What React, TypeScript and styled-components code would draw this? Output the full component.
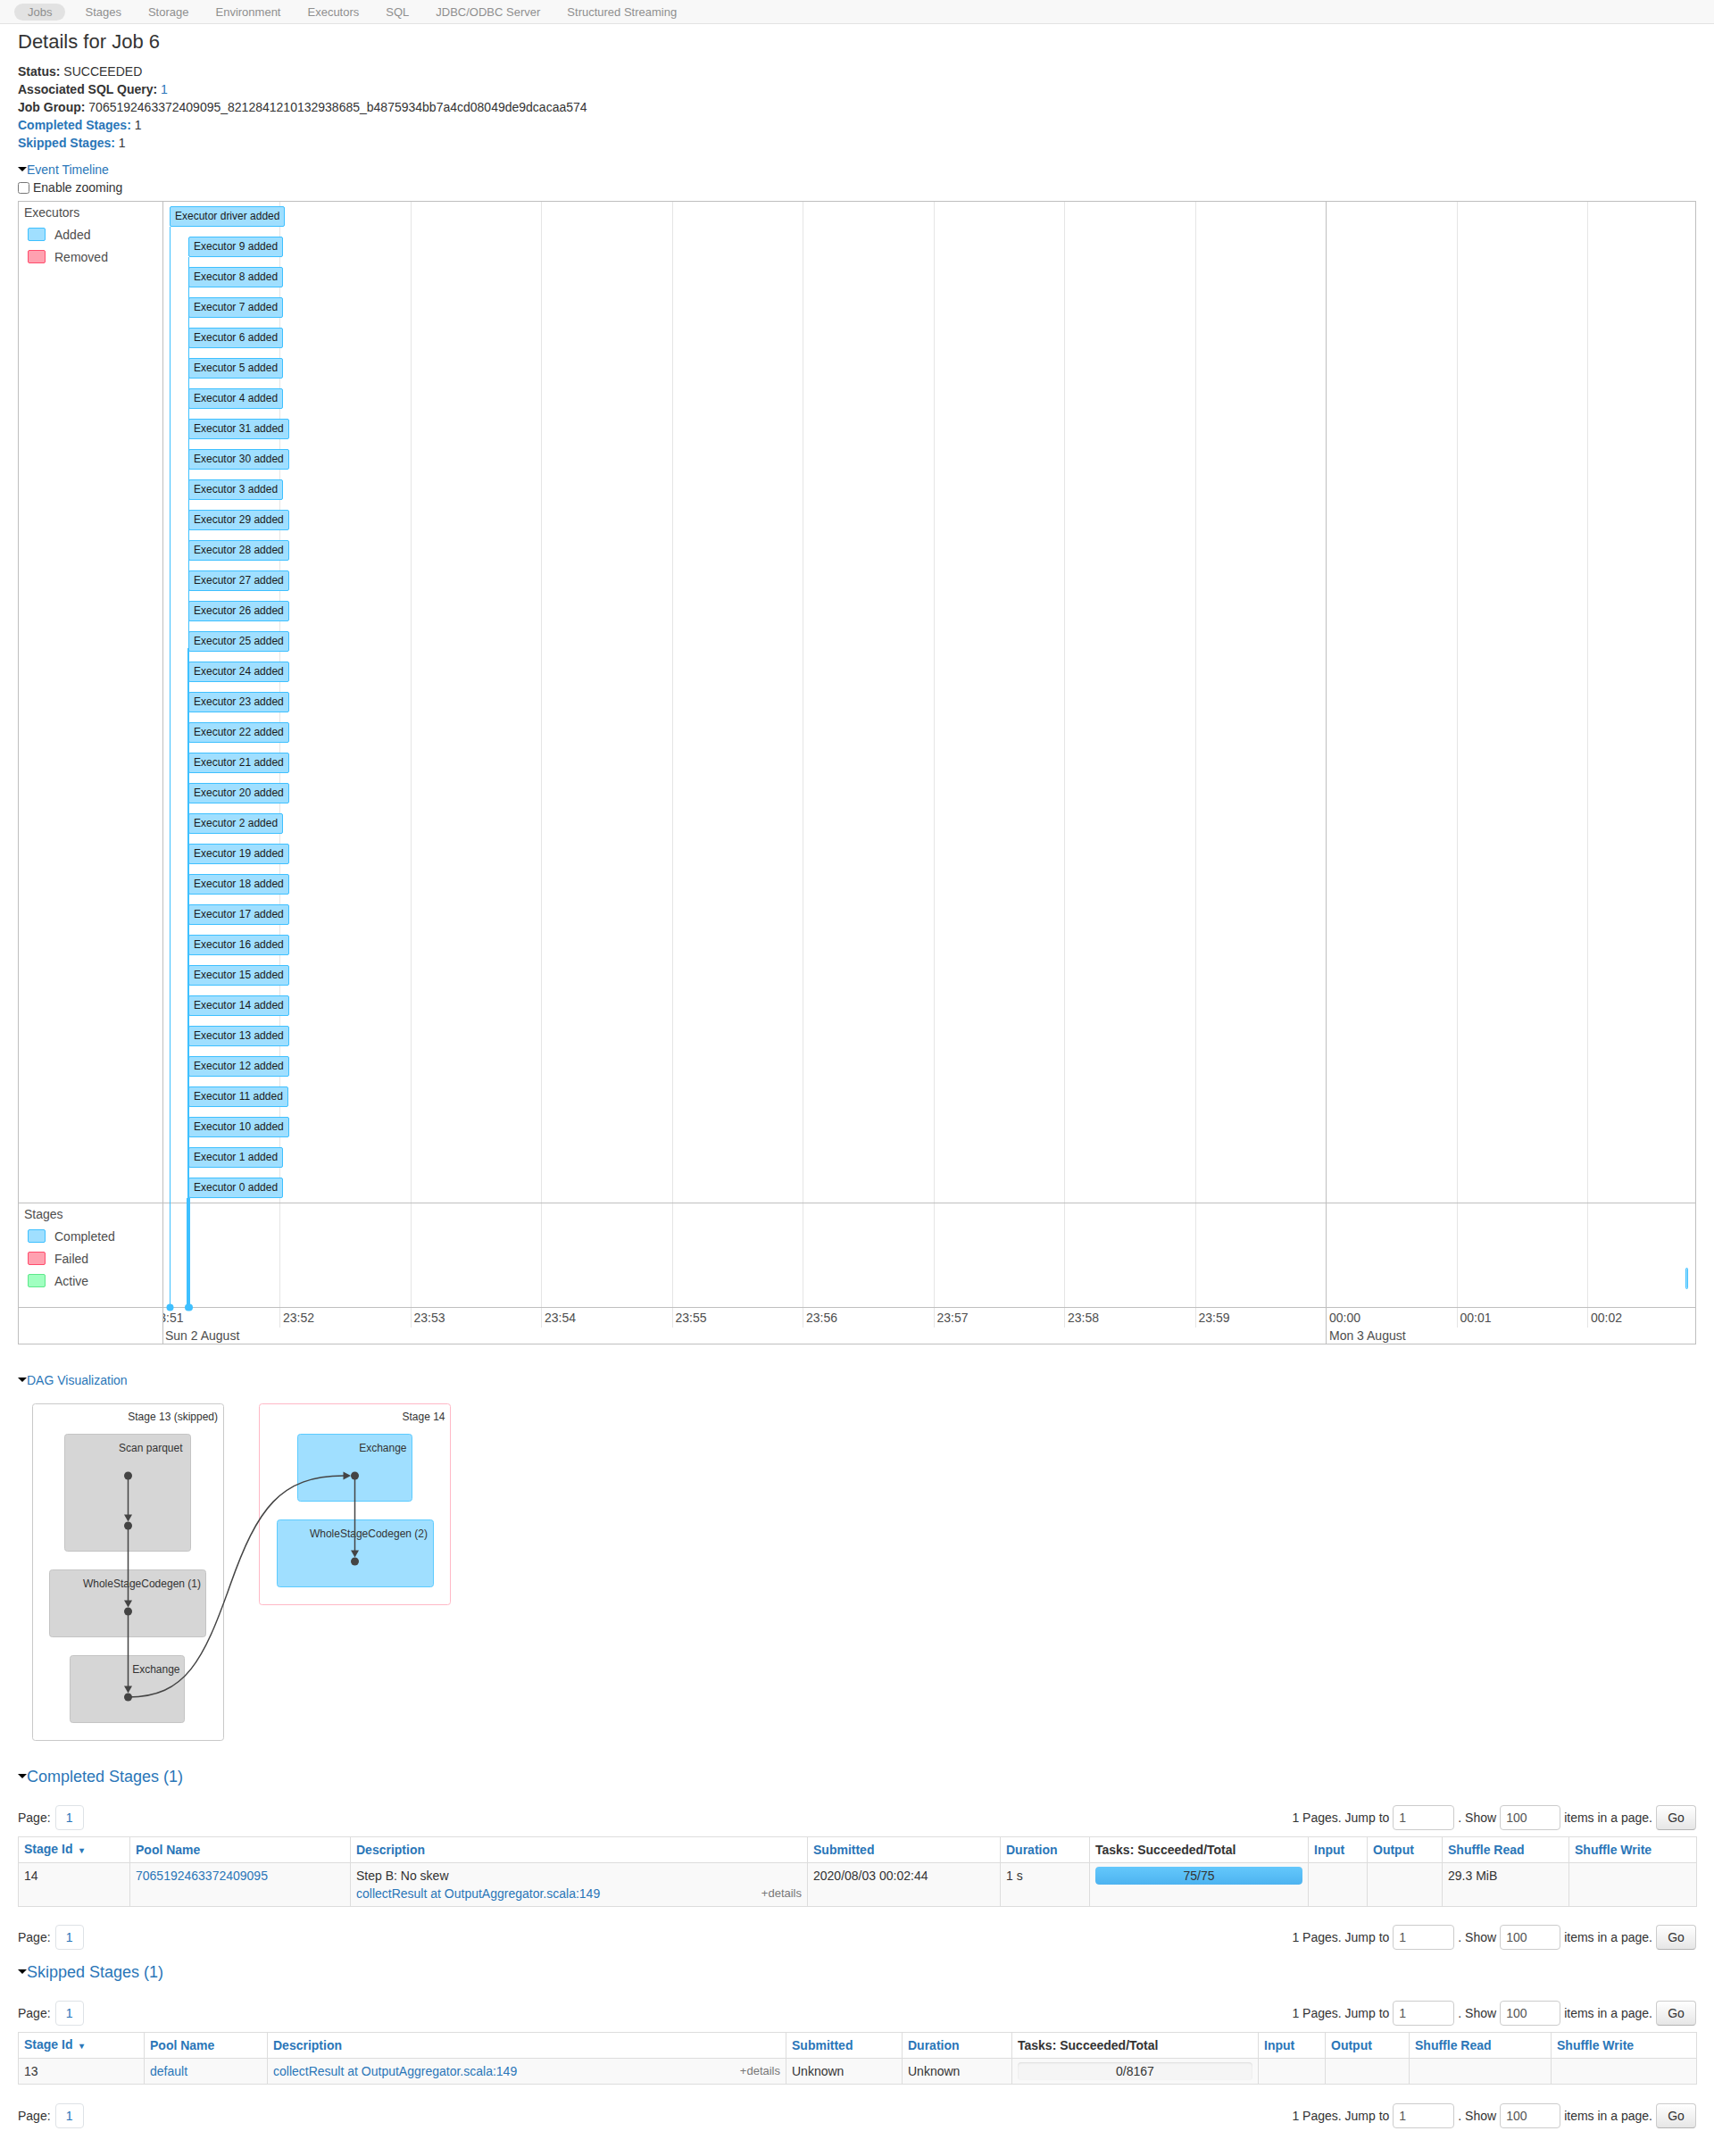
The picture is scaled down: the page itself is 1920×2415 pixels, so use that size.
import React from 'react';
import styled, { createGlobalStyle } from 'styled-components';

const LINK = '#2a76b8';

const GlobalStyle = createGlobalStyle`
  html, body { margin: 0; padding: 0; background: #fff; }
  body {
    font-family: "Liberation Sans", Arial, Helvetica, sans-serif;
    font-size: 14px;
    line-height: 20px;
    color: #333;
  }
  * { box-sizing: border-box; }
  a { color: ${LINK}; text-decoration: none; }
`;

/* ---------- nav ---------- */
const NavBar = styled.nav`
  height: 27px;
  border-bottom: 1px solid #e3e3e3;
  background: #f8f8f8;
  display: flex;
  align-items: center;
  padding-left: 16px;
`;
const NavItem = styled.a<{ $active?: boolean }>`
  font-size: 13px;
  line-height: 19px;
  height: 19px;
  padding: 0 15px;
  color: #8f8f8f;
  border-radius: 10px;
  background: ${(p) => (p.$active ? '#e2e2e2' : 'transparent')};
  margin-right: ${(p) => (p.$active ? '7px' : '0')};
`;

/* ---------- page ---------- */
const Page = styled.div`
  padding: 0 20px 31px;
`;
const Title = styled.h3`
  margin: 7px 0 10px;
  font-size: 22px;
  line-height: 26px;
  font-weight: normal;
  color: #333;
`;
const Summary = styled.ul`
  list-style: none;
  margin: 0;
  padding: 0;
`;
const SummaryItem = styled.li`
  line-height: 20px;
`;
const Strong = styled.strong`
  font-weight: bold;
`;
const StrongLink = styled.a`
  font-weight: bold;
`;

const Toggle = styled.div<{ $size: number; $line: number; $mt: number }>`
  display: flex;
  align-items: center;
  margin-top: ${(p) => p.$mt}px;
  font-size: ${(p) => p.$size}px;
  line-height: ${(p) => p.$line}px;
  color: ${LINK};
`;
const Arrow = styled.span`
  width: 0;
  height: 0;
  border-left: 5px solid transparent;
  border-right: 5px solid transparent;
  border-top: 5px solid #000;
  margin-top: -2px;
`;
const CheckRow = styled.label`
  display: flex;
  align-items: center;
  line-height: 20px;
`;
const Check = styled.input`
  width: 13px;
  height: 13px;
  margin: 0 4px 0 0;
`;

/* ---------- timeline ---------- */
const TimelineFrame = styled.div`
  margin-top: 5px;
  border: 1px solid #bfbfbf;
  display: grid;
  grid-template-columns: 162px 1fr;
  grid-template-rows: 1122px 117px 40px;
  color: #4d4d4d;
`;
const GroupLabel = styled.div<{ $last?: boolean }>`
  border-right: 1px solid #bfbfbf;
  border-bottom: ${(p) => (p.$last ? 'none' : '1px solid #bfbfbf')};
  padding: 4px 0 0 6px;
`;
const GroupTitle = styled.div`
  font-size: 14px;
  line-height: 16px;
  margin-bottom: 4px;
`;
const LegendRow = styled.div`
  display: flex;
  align-items: center;
  height: 25px;
  font-size: 14px;
`;
const Swatch = styled.span<{ $bg: string; $bd: string }>`
  width: 20px;
  height: 15px;
  margin: 0 10px 0 4px;
  border-radius: 2px;
  background: ${(p) => p.$bg};
  border: 1px solid ${(p) => p.$bd};
`;
const Canvas = styled.div`
  grid-column: 2;
  grid-row: 1 / span 3;
  position: relative;
  overflow: hidden;
`;
const CanvasSvg = styled.svg`
  position: absolute;
  left: 0;
  top: 0;
  width: 100%;
  height: 100%;
`;
const ItemBox = styled.div`
  position: absolute;
  white-space: nowrap;
  font-size: 12px;
  line-height: 13px;
  padding: 4px 5px;
  color: #1a1a1a;
  background: #a0dfff;
  border: 1px solid #3ec0ff;
  border-radius: 2px;
`;
const AxisLabel = styled.div<{ $major?: boolean }>`
  position: absolute;
  white-space: nowrap;
  font-size: 14px;
  line-height: 16px;
  color: #4d4d4d;
  top: ${(p) => (p.$major ? 1262 : 1242)}px;
`;

/* ---------- DAG ---------- */
const DagSvg = styled.svg`
  display: block;
  margin-top: 4px;
  font-family: "Liberation Sans", Arial, sans-serif;
`;

/* ---------- tables ---------- */
const SectionTitle = styled(Toggle)``;
const PagerRow = styled.div<{ $mt: number }>`
  display: flex;
  justify-content: space-between;
  align-items: center;
  height: 28px;
  margin-top: ${(p) => p.$mt}px;
`;
const PagerLeft = styled.div`
  display: flex;
  align-items: center;
  gap: 5px;
`;
const PageBox = styled.a`
  display: inline-flex;
  align-items: center;
  justify-content: center;
  width: 32px;
  height: 28px;
  border: 1px solid #dee2e6;
  border-radius: 4px;
`;
const PagerRight = styled.div`
  display: flex;
  align-items: center;
  gap: 4px;
`;
const PagerInput = styled.input<{ $w: number }>`
  width: ${(p) => p.$w}px;
  height: 28px;
  border: 1px solid #ccc;
  border-radius: 4px;
  padding: 0 6px;
  font: 14px "Liberation Sans", Arial, sans-serif;
  color: #555;
`;
const GoButton = styled.button`
  width: 45px;
  height: 28px;
  border: 1px solid #ccc;
  border-bottom-color: #b3b3b3;
  border-radius: 4px;
  background: linear-gradient(#ffffff, #e6e6e6);
  font: 14px "Liberation Sans", Arial, sans-serif;
  color: #333;
  padding: 0;
`;
const Table = styled.table<{ $mt: number }>`
  margin-top: ${(p) => p.$mt}px;
  width: 100%;
  table-layout: fixed;
  border-collapse: collapse;
  border: 1px solid #ddd;
`;
const Col = styled.col<{ $w: number }>`
  width: ${(p) => p.$w}px;
`;
const Th = styled.th`
  text-align: left;
  font-weight: bold;
  padding: 3px 6px;
  border: 1px solid #ddd;
  line-height: 20px;
  white-space: nowrap;
  overflow: hidden;
`;
const Td = styled.td`
  padding: 4px 6px;
  border: 1px solid #ddd;
  line-height: 20px;
  vertical-align: top;
`;
const Tr = styled.tr`
  background: #f9f9f9;
`;
const SortArrow = styled.span`
  font-size: 10px;
  margin-left: 8px;
  color: ${LINK};
`;
const Details = styled.span`
  float: right;
  font-size: 13px;
  color: #777;
`;
const Progress = styled.div`
  position: relative;
  height: 20px;
  border-radius: 4px;
  background: #f5f5f5;
  box-shadow: inset 0 1px 2px rgba(0, 0, 0, 0.1);
  overflow: hidden;
`;
const ProgressFill = styled.div`
  height: 100%;
  background: linear-gradient(#64c8fc, #4db3f0);
  border-radius: 4px;
`;
const ProgressText = styled.span`
  position: absolute;
  left: 0;
  right: 0;
  top: 0;
  text-align: center;
  line-height: 20px;
  color: #333;
`;

/* ---------- data ---------- */
const executors = [
  'driver', '9', '8', '7', '6', '5', '4', '31', '30', '3', '29', '28', '27', '26', '25', '24',
  '23', '22', '21', '20', '2', '19', '18', '17', '16', '15', '14', '13', '12', '11', '10', '1', '0',
];
const X0 = 130;
const STEP = 146.5;
const minorLabels = ['23:51', '23:52', '23:53', '23:54', '23:55', '23:56', '23:57', '23:58', '23:59', '00:00', '00:01', '00:02'];

function Timeline() {
  const gridXs = minorLabels.map((_, i) => X0 + (i - 1) * STEP);
  return (
    <TimelineFrame>
      <GroupLabel>
        <GroupTitle>Executors</GroupTitle>
        <LegendRow><Swatch $bg="#a0dfff" $bd="#3ec0ff" />Added</LegendRow>
        <LegendRow><Swatch $bg="#ffa1b0" $bd="#ff4d6d" />Removed</LegendRow>
      </GroupLabel>
      <Canvas>
        <CanvasSvg>
          {gridXs.map((x, i) => (
            <line
              key={i}
              x1={Math.round(x) + 0.5}
              x2={Math.round(x) + 0.5}
              y1={0}
              y2={i === 9 ? 1279 : 1261}
              stroke={i === 9 ? '#bfbfbf' : '#e5e5e5'}
              strokeWidth={1}
            />
          ))}
          <line x1={0} x2={2000} y1={1121.5} y2={1121.5} stroke="#bfbfbf" />
          <line x1={0} x2={2000} y1={1238.5} y2={1238.5} stroke="#bfbfbf" />
          <rect x={7} y={28} width={1} height={1210} fill="#3ec0ff" />
          <rect x={28} y={62} width={1} height={1176} fill="#3ec0ff" />
          <rect x={27} y={500} width={2} height={738} fill="#3ec0ff" />
          <rect x={26} y={1116} width={4} height={122} fill="#3ec0ff" />
          <circle cx={7.5} cy={1238.5} r={4} fill="#3ec0ff" />
          <rect x={24} y={1234.5} width={9} height={8} rx={4} fill="#3ec0ff" />
          <rect x={1705.5} y={1194.5} width={2} height={23} rx={1} fill="#a0dfff" stroke="#3ec0ff" />
        </CanvasSvg>
        {executors.map((e, i) => (
          <ItemBox key={e} style={{ left: i === 0 ? 7 : 28, top: 5 + i * 34 }}>
            Executor {e} added
          </ItemBox>
        ))}
        {minorLabels.map((l, i) => (
          <AxisLabel key={l} style={{ left: gridXs[i] + 4 }}>{l}</AxisLabel>
        ))}
        <AxisLabel $major style={{ left: 2 }}>Sun 2 August</AxisLabel>
        <AxisLabel $major style={{ left: gridXs[9] + 4 }}>Mon 3 August</AxisLabel>
      </Canvas>
      <GroupLabel>
        <GroupTitle>Stages</GroupTitle>
        <LegendRow><Swatch $bg="#a0dfff" $bd="#3ec0ff" />Completed</LegendRow>
        <LegendRow><Swatch $bg="#ffa1b0" $bd="#ff4d6d" />Failed</LegendRow>
        <LegendRow><Swatch $bg="#a0ffc0" $bd="#5ee88a" />Active</LegendRow>
      </GroupLabel>
      <GroupLabel $last />
    </TimelineFrame>
  );
}

function Down({ x, tip }: { x: number; tip: number }) {
  return <polygon points={`${x - 4.5},${tip - 8} ${x + 4.5},${tip - 8} ${x},${tip}`} fill="#444" />;
}

function Dag() {
  const label = { fontSize: 12, fill: '#333', textAnchor: 'end' as const };
  return (
    <DagSvg width={520} height={410}>
      <rect x={16.5} y={12.5} width={214} height={377} rx={3} fill="#fff" stroke="#c9c9c9" />
      <text x={224} y={31} {...label}>Stage 13 (skipped)</text>
      <rect x={52.5} y={46.5} width={141} height={131} rx={3} fill="#d6d6d6" stroke="#c4c4c4" />
      <text x={184.5} y={66} {...label}>Scan parquet</text>
      <rect x={35.5} y={198.5} width={175} height={75} rx={3} fill="#d6d6d6" stroke="#c4c4c4" />
      <text x={205} y={218} {...label}>WholeStageCodegen (1)</text>
      <rect x={58.5} y={294.5} width={128} height={75} rx={3} fill="#d6d6d6" stroke="#c4c4c4" />
      <text x={181.5} y={314} {...label}>Exchange</text>

      <rect x={270.5} y={12.5} width={214} height={225} rx={3} fill="#fff" stroke="#ffb8c6" />
      <text x={478.5} y={31} {...label}>Stage 14</text>
      <rect x={313.5} y={46.5} width={128} height={75} rx={3} fill="#a0dfff" stroke="#5ccbff" />
      <text x={435.5} y={66} {...label}>Exchange</text>
      <rect x={290.5} y={142.5} width={175} height={75} rx={3} fill="#a0dfff" stroke="#5ccbff" />
      <text x={459} y={162} {...label}>WholeStageCodegen (2)</text>

      <g stroke="#444" strokeWidth={1.5} fill="none">
        <path d="M123.5,93 L123.5,138" />
        <path d="M123.5,149 L123.5,234" />
        <path d="M123.5,245 L123.5,330" />
        <path d="M377.5,93 L377.5,178" />
        <path d="M123.5,341 C188,341 208,300 238,215 S294,93 365,93" />
      </g>
      <Down x={123.5} tip={144.5} />
      <Down x={123.5} tip={240.5} />
      <Down x={123.5} tip={336.5} />
      <Down x={377.5} tip={184.5} />
      <polygon points="364.5,88.5 364.5,97.5 373,93" fill="#444" />
      {[93, 149, 245, 341].map((y) => <circle key={y} cx={123.5} cy={y} r={4.5} fill="#444" />)}
      <circle cx={377.5} cy={93} r={4.5} fill="#444" />
      <circle cx={377.5} cy={189} r={4.5} fill="#444" />
    </DagSvg>
  );
}

function Pager({ mt }: { mt: number }) {
  return (
    <PagerRow $mt={mt}>
      <PagerLeft>
        <span>Page:</span>
        <PageBox>1</PageBox>
      </PagerLeft>
      <PagerRight>
        <span>1 Pages. Jump to</span>
        <PagerInput $w={69} defaultValue="1" />
        <span>. Show</span>
        <PagerInput $w={68} defaultValue="100" />
        <span>items in a page.</span>
        <GoButton>Go</GoButton>
      </PagerRight>
    </PagerRow>
  );
}

type Head = { label: string; link?: boolean; sort?: boolean };
const heads: Head[] = [
  { label: 'Stage Id', link: true, sort: true },
  { label: 'Pool Name', link: true },
  { label: 'Description', link: true },
  { label: 'Submitted', link: true },
  { label: 'Duration', link: true },
  { label: 'Tasks: Succeeded/Total' },
  { label: 'Input', link: true },
  { label: 'Output', link: true },
  { label: 'Shuffle Read', link: true },
  { label: 'Shuffle Write', link: true },
];

function StageTable({ widths, mt, children }: { widths: number[]; mt: number; children: React.ReactNode }) {
  return (
    <Table $mt={mt}>
      <colgroup>
        {widths.map((w, i) => <Col key={i} $w={w} />)}
      </colgroup>
      <thead>
        <tr>
          {heads.map((h) => (
            <Th key={h.label}>
              {h.link ? <a>{h.label}</a> : h.label}
              {h.sort && <SortArrow>&#x25BE;</SortArrow>}
            </Th>
          ))}
        </tr>
      </thead>
      <tbody>{children}</tbody>
    </Table>
  );
}

export default function App() {
  const navs = ['Jobs', 'Stages', 'Storage', 'Environment', 'Executors', 'SQL', 'JDBC/ODBC Server', 'Structured Streaming'];
  return (
    <>
      <GlobalStyle />
      <NavBar>
        {navs.map((n, i) => (
          <NavItem key={n} $active={i === 0}>{n}</NavItem>
        ))}
      </NavBar>
      <Page>
        <Title>Details for Job 6</Title>
        <Summary>
          <SummaryItem><Strong>Status:</Strong> SUCCEEDED</SummaryItem>
          <SummaryItem><Strong>Associated SQL Query:</Strong> <a>1</a></SummaryItem>
          <SummaryItem><Strong>Job Group:</Strong> 7065192463372409095_8212841210132938685_b4875934bb7a4cd08049de9dcacaa574</SummaryItem>
          <SummaryItem><StrongLink>Completed Stages:</StrongLink> 1</SummaryItem>
          <SummaryItem><StrongLink>Skipped Stages:</StrongLink> 1</SummaryItem>
        </Summary>

        <Toggle $size={14} $line={20} $mt={10}><Arrow />Event Timeline</Toggle>
        <CheckRow><Check type="checkbox" />Enable zooming</CheckRow>
        <Timeline />

        <Toggle $size={14} $line={20} $mt={30}><Arrow />DAG Visualization</Toggle>
        <Dag />

        <SectionTitle $size={18} $line={22} $mt={9}><Arrow />Completed Stages (1)</SectionTitle>
        <Pager mt={21} />
        <StageTable widths={[125, 247, 512, 216, 100, 245, 66, 84, 142, 143]} mt={7}>
          <Tr>
            <Td>14</Td>
            <Td><a>7065192463372409095</a></Td>
            <Td>
              <div>Step B: No skew</div>
              <Details>+details</Details>
              <a>collectResult at OutputAggregator.scala:149</a>
            </Td>
            <Td>2020/08/03 00:02:44</Td>
            <Td>1 s</Td>
            <Td>
              <Progress>
                <ProgressFill style={{ width: '100%' }} />
                <ProgressText>75/75</ProgressText>
              </Progress>
            </Td>
            <Td />
            <Td />
            <Td>29.3 MiB</Td>
            <Td />
          </Tr>
        </StageTable>
        <Pager mt={20} />

        <SectionTitle $size={18} $line={22} $mt={14}><Arrow />Skipped Stages (1)</SectionTitle>
        <Pager mt={21} />
        <StageTable widths={[141, 138, 581, 130, 123, 276, 75, 94, 159, 163]} mt={7}>
          <Tr>
            <Td>13</Td>
            <Td><a>default</a></Td>
            <Td>
              <Details>+details</Details>
              <a>collectResult at OutputAggregator.scala:149</a>
            </Td>
            <Td>Unknown</Td>
            <Td>Unknown</Td>
            <Td>
              <Progress>
                <ProgressFill style={{ width: '0%' }} />
                <ProgressText>0/8167</ProgressText>
              </Progress>
            </Td>
            <Td />
            <Td />
            <Td />
            <Td />
          </Tr>
        </StageTable>
        <Pager mt={21} />
      </Page>
    </>
  );
}
